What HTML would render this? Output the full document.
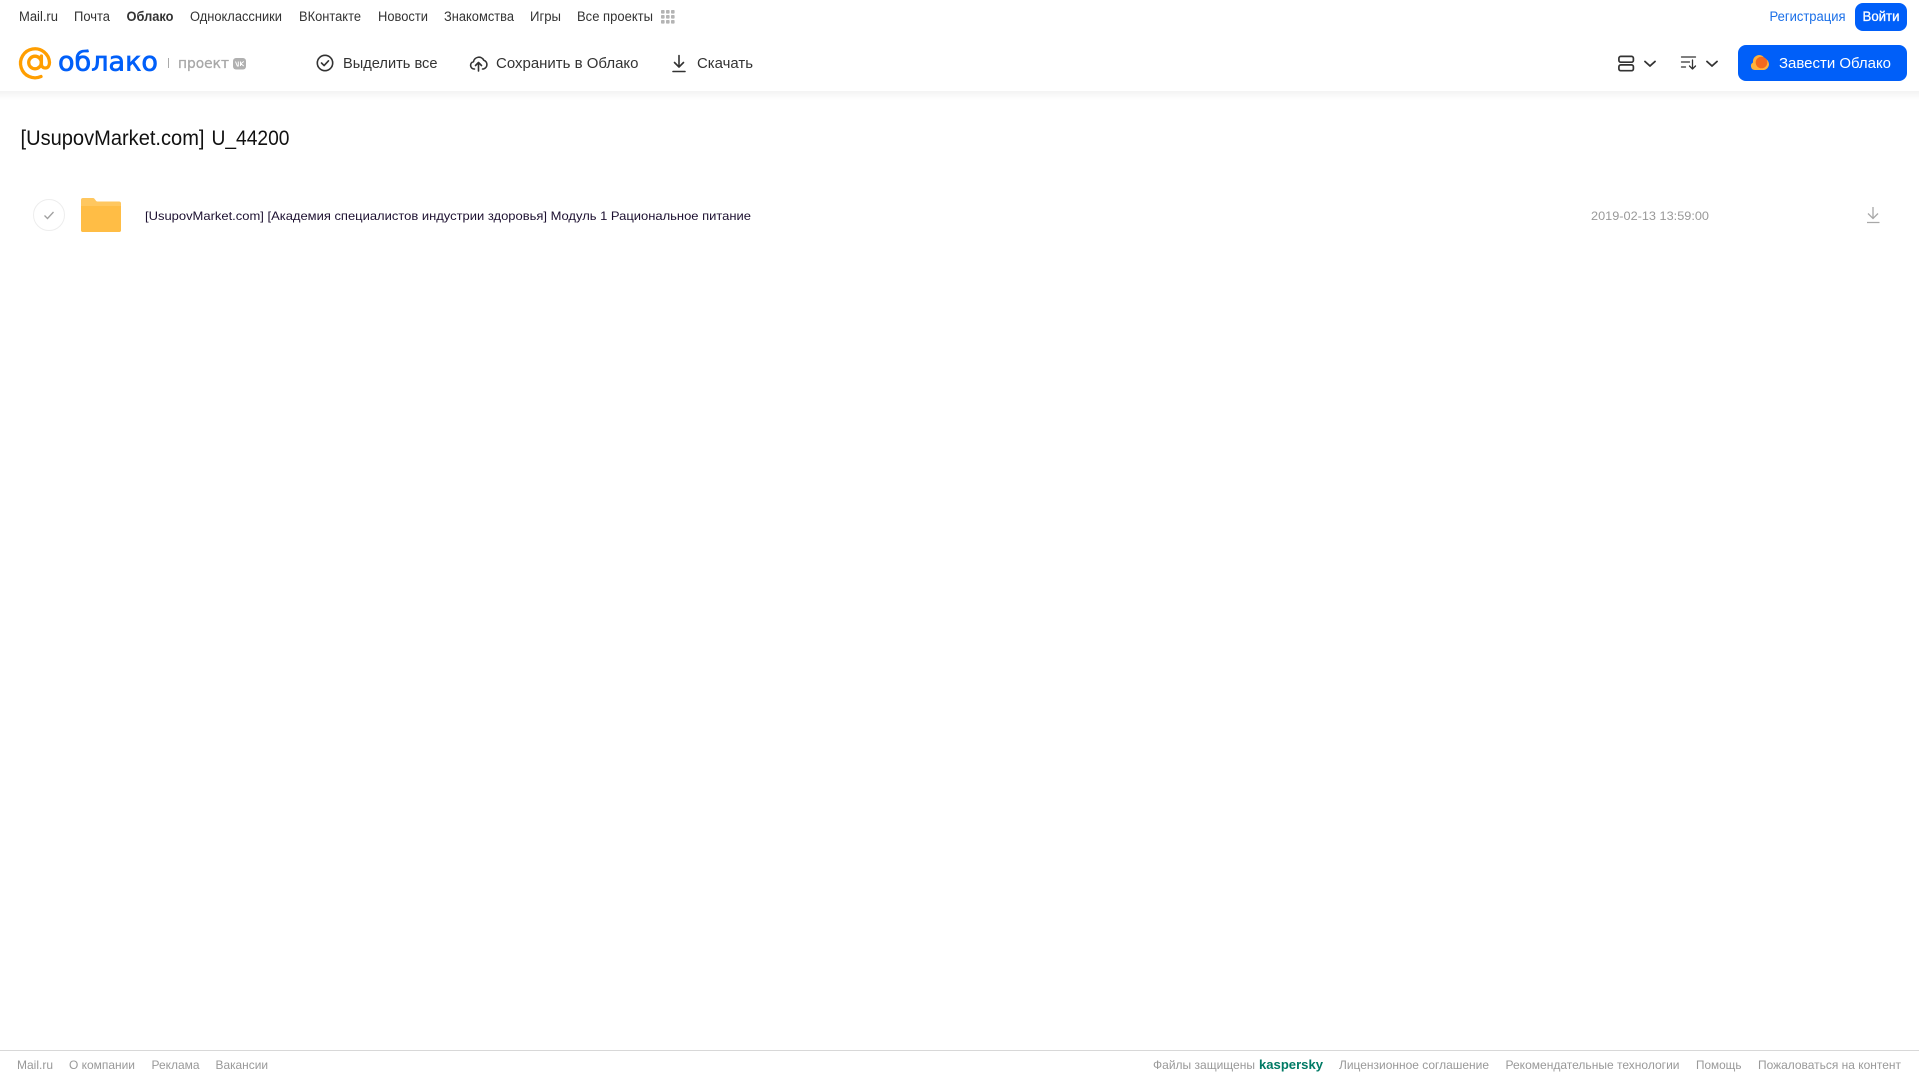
<!DOCTYPE html>
<html lang="ru"><head><meta charset="utf-8"><title>Облако</title>
<style>
html,body{margin:0;padding:0;background:#fff;width:1919px;height:1079px;overflow:hidden}
svg{display:block}
text{font-family:"Liberation Sans",Arial,sans-serif;white-space:pre}
.n{font-size:13.5px;fill:#333}
.t{font-size:15px;fill:#333}
.f{font-size:12px;fill:#999}
.i{fill:none;stroke:#333;stroke-width:1.6;stroke-linecap:round;stroke-linejoin:round}
</style></head><body>
<svg xmlns="http://www.w3.org/2000/svg" width="1919" height="1079" viewBox="0 0 1919 1079">
<defs><linearGradient id="s" x1="0" y1="0" x2="0" y2="1"><stop offset="0" stop-color="#f3f3f3"/><stop offset="1" stop-color="#fff"/></linearGradient></defs>
<rect width="1919" height="1079" fill="#fff"/>
<rect y="91" width="1919" height="9" fill="url(#s)"/>

<text class="n" x="19" y="21" textLength="39" lengthAdjust="spacingAndGlyphs">Mail.ru</text>
<text class="n" x="74" y="21" textLength="36" lengthAdjust="spacingAndGlyphs">Почта</text>
<text class="n" x="126.5" y="21" textLength="47" lengthAdjust="spacingAndGlyphs" font-weight="700">Облако</text>
<text class="n" x="190" y="21" textLength="92" lengthAdjust="spacingAndGlyphs">Одноклассники</text>
<text class="n" x="299" y="21" textLength="62" lengthAdjust="spacingAndGlyphs">ВКонтакте</text>
<text class="n" x="378" y="21" textLength="50" lengthAdjust="spacingAndGlyphs">Новости</text>
<text class="n" x="444" y="21" textLength="70" lengthAdjust="spacingAndGlyphs">Знакомства</text>
<text class="n" x="530" y="21" textLength="31" lengthAdjust="spacingAndGlyphs">Игры</text>
<text class="n" x="577" y="21" textLength="76" lengthAdjust="spacingAndGlyphs">Все проекты</text>
<g fill="#b4b4b4"><rect x="661" y="10" width="3.6" height="3.6" rx=".8"/><rect x="666" y="10" width="3.6" height="3.6" rx=".8"/><rect x="671" y="10" width="3.6" height="3.6" rx=".8"/><rect x="661" y="15" width="3.6" height="3.6" rx=".8"/><rect x="666" y="15" width="3.6" height="3.6" rx=".8"/><rect x="671" y="15" width="3.6" height="3.6" rx=".8"/><rect x="661" y="20" width="3.6" height="3.6" rx=".8"/><rect x="666" y="20" width="3.6" height="3.6" rx=".8"/><rect x="671" y="20" width="3.6" height="3.6" rx=".8"/></g>

<g fill="none" stroke="#ff9e00" stroke-width="3.3" stroke-linecap="round"><circle cx="35" cy="62.500" r="6.300"/><path d="M41 76.500A14.500 14.500 0 1 1 49.500 62.500c0 3-1.500 5.500-4.200 5.500c-2.300 0-3.900-1.700-3.900-4V56"/></g>
<text x="58" y="70.500" textLength="100" lengthAdjust="spacingAndGlyphs" style="font-family:'DejaVu Sans',sans-serif;font-size:27px;fill:#005ff9;stroke:#005ff9;stroke-width:.7">облако</text>
<rect x="168" y="58" width="1" height="10" fill="#aaa"/>
<text x="178" y="68" textLength="51" lengthAdjust="spacingAndGlyphs" style="font-family:'DejaVu Sans',sans-serif;font-size:14.500px;fill:#a8a8a8;stroke:#a8a8a8;stroke-width:.3">проект</text>
<rect x="233" y="58" width="13" height="11.500" rx="3" fill="#b0b0b0"/>
<path d="M235.500 61.500l1.800 4.500h1v-4.500M240.500 61.500v4.500M243.800 61.500l-3 2.200l3 2.300" fill="none" stroke="#fff" stroke-width="1"/>

<circle class="i" cx="325" cy="63" r="7.700"/><path class="i" d="M321.500 63l2.600 2.600l4.400-4.800"/>
<text class="t" x="343" y="68" textLength="94.500" lengthAdjust="spacingAndGlyphs">Выделить все</text>
<path class="i" d="M474.500 69h-.5a3.700 3.700 0 0 1-.5-7.300a5.500 5.500 0 0 1 10.300-1.500a4.600 4.600 0 0 1-.3 8.800h-1M478.500 71v-8M475.500 65.500l3-3l3 3"/>
<text class="t" x="496" y="68" textLength="142.500" lengthAdjust="spacingAndGlyphs">Сохранить в Облако</text>
<path class="i" d="M679 55.500v11M674.500 62.500l4.500 4.500l4.500-4.500M673 71.500h12"/>
<text class="t" x="697" y="68" textLength="56" lengthAdjust="spacingAndGlyphs">Скачать</text>

<text class="n" x="1769.500" y="21" textLength="76" lengthAdjust="spacingAndGlyphs" style="fill:#1a6fe8">Регистрация</text>
<rect x="1855" y="3" width="52" height="28" rx="8" fill="#005ff9"/>
<text class="n" x="1862.500" y="21" textLength="37" lengthAdjust="spacingAndGlyphs" style="fill:#fff;stroke:#fff;stroke-width:.3">Войти</text>

<g fill="none" stroke="#333" stroke-width="1.700"><rect x="1618.900" y="56.400" width="14.500" height="5.800" rx="1.800"/><rect x="1618.900" y="64.900" width="14.500" height="5.800" rx="1.800"/></g>
<path class="i" d="M1645 61.500l5 4.500l5-4.500M1707 61.500l5 4.500l5-4.500" style="stroke-width:1.800"/>
<path class="i" d="M1681.500 57h14M1681.500 62h8M1681.500 67h4M1692.500 60v9M1689.500 66l3 3l3-3" style="stroke-width:1.300"/>
<rect x="1738" y="45" width="169" height="36" rx="8" fill="#005ff9"/>
<path d="M1755 70a4 4 0 0 1-2-7.500a6.500 6.500 0 0 1 6-7.500a6 6 0 0 1 5.500 3.500a6 6 0 0 1 4.500 5.500a6 6 0 0 1-5.500 6z" fill="#ffb13b"/>
<circle cx="1761.500" cy="62.500" r="5.800" fill="#f2691f"/>
<text class="t" x="1779" y="68" textLength="112" lengthAdjust="spacingAndGlyphs" style="fill:#fff">Завести Облако</text>

<text x="20.500" y="145" textLength="184" lengthAdjust="spacingAndGlyphs" style="font-size:21.500px;fill:#111">[UsupovMarket.com]</text>
<text x="211.500" y="145" textLength="78" lengthAdjust="spacingAndGlyphs" style="font-size:21.500px;fill:#111">U_44200</text>

<circle cx="49" cy="215" r="15.500" fill="#fff" stroke="#ededed"/>
<path d="M44.500 215.500l3 3l6-6.500" fill="none" stroke="#a0a0a0" stroke-width="1.300"/>
<path d="M83 198h10c2 0 2.500 3.500 4.500 3.500H119a2 2 0 0 1 2 2V230a2 2 0 0 1-2 2H83a2 2 0 0 1-2-2V200a2 2 0 0 1 2-2z" fill="#ffc75f"/>
<path d="M81 206h40v24a2 2 0 0 1-2 2H83a2 2 0 0 1-2-2z" fill="#ffbd45"/>
<text x="145" y="220" textLength="606" lengthAdjust="spacingAndGlyphs" style="font-size:12px;fill:#1c1030">[UsupovMarket.com] [Академия специалистов индустрии здоровья] Модуль 1 Рациональное питание</text>
<text x="1591" y="220" textLength="118" lengthAdjust="spacingAndGlyphs" style="font-size:12px;fill:#999">2019-02-13 13:59:00</text>
<path d="M1873 207v11M1868 213.500l5 5l5-5M1867 222.500h12.500" fill="none" stroke="#a8a8a8" stroke-width="1.300"/>

<rect y="1050" width="1919" height="1" fill="#d8d8d8"/>
<text class="f" x="17" y="1069" textLength="36" lengthAdjust="spacingAndGlyphs">Mail.ru</text>
<text class="f" x="69" y="1069" textLength="66" lengthAdjust="spacingAndGlyphs">О компании</text>
<text class="f" x="151.500" y="1069" textLength="48" lengthAdjust="spacingAndGlyphs">Реклама</text>
<text class="f" x="215.500" y="1069" textLength="52.500" lengthAdjust="spacingAndGlyphs">Вакансии</text>
<text class="f" x="1153" y="1069" textLength="102" lengthAdjust="spacingAndGlyphs">Файлы защищены</text>
<text x="1259" y="1069" textLength="64" lengthAdjust="spacingAndGlyphs" style="font-size:13px;font-weight:700;fill:#007a65">kaspersky</text>
<text class="f" x="1339" y="1069" textLength="150" lengthAdjust="spacingAndGlyphs">Лицензионное соглашение</text>
<text class="f" x="1505.500" y="1069" textLength="174" lengthAdjust="spacingAndGlyphs">Рекомендательные технологии</text>
<text class="f" x="1696" y="1069" textLength="45.500" lengthAdjust="spacingAndGlyphs">Помощь</text>
<text class="f" x="1758" y="1069" textLength="143" lengthAdjust="spacingAndGlyphs">Пожаловаться на контент</text>
</svg>
</body></html>
